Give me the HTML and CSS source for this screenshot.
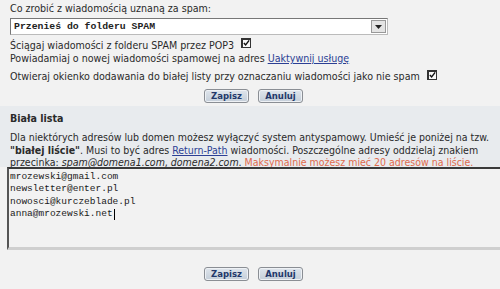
FILE: index.html
```html
<!DOCTYPE html>
<html lang="pl">
<head>
<meta charset="utf-8">
<link rel="stylesheet" href="styles.css">
</head>
<body>
<div class="page">
  <div class="top">
    <div class="label">Co zrobić z wiadomością uznaną za spam:</div>
    <div class="select">
      <span class="select-text">Przenieś do folderu SPAM</span>
      <span class="select-btn"><svg width="7" height="4" viewBox="0 0 7 4"><path d="M0 0h7L3.5 4z" fill="#222"/></svg></span>
    </div>
    <div class="row r1">Ściągaj wiadomości z folderu SPAM przez POP3 <span class="cb"><svg width="8" height="8" viewBox="0 0 8 8"><path d="M1 4l2 2.3L7 1" stroke="#111" stroke-width="1.6" fill="none"/></svg></span></div>
    <div class="row r2">Powiadamiaj o nowej wiadomości spamowej na adres <a class="link">Uaktywnij usługę</a></div>
    <div class="row r3">Otwieraj okienko dodawania do białej listy przy oznaczaniu wiadomości jako nie spam <span class="cb"><svg width="8" height="8" viewBox="0 0 8 8"><path d="M1 4l2 2.3L7 1" stroke="#111" stroke-width="1.6" fill="none"/></svg></span></div>
    <div class="buttons b1"><span class="btn">Zapisz</span><span class="btn">Anuluj</span></div>
  </div>
  <div class="band">
    <div class="title">Biała lista</div>
    <div class="desc">Dla niektórych adresów lub domen możesz wyłączyć system antyspamowy. Umieść je poniżej na tzw.<br><b>"białej liście"</b>. Musi to być adres <a class="link">Return-Path</a> wiadomości. Poszczególne adresy oddzielaj znakiem<br>przecinka: <i>spam@domena1.com</i>, <i>domena2.com</i>. <span class="red">Maksymalnie możesz mieć 20 adresów na liście.</span></div>
  </div>
  <div class="area">
    <div class="ln">mrozewski@gmail.com</div>
    <div class="ln">newsletter@enter.pl</div>
    <div class="ln">nowosci@kurczeblade.pl</div>
    <div class="ln">anna@mrozewski.net<span class="caret"></span></div>
  </div>
  <div class="buttons b2"><span class="btn">Zapisz</span><span class="btn">Anuluj</span></div>
</div>
</body>
</html>
```
FILE: styles.css
```css
* { box-sizing: border-box; }
html, body { margin: 0; padding: 0; }
body {
  width: 500px;
  height: 289px;
  overflow: hidden;
  background: #f2f2f2;
  font-family: "DejaVu Sans Condensed", "DejaVu Sans", sans-serif;
  font-size: 10.6px;
  color: #2a2a2a;
}
.page { display: flex; flex-direction: column; }
.top { padding: 1px 0 0 10px; }
.label { height: 15px; line-height: 14px; }
.select {
  width: 378px;
  height: 17px;
  margin-top: 2px;
  background: #fff;
  border: 1px solid #777;
  border-right-color: #bbb;
  border-bottom-color: #bbb;
  display: flex;
  align-items: center;
  justify-content: space-between;
  padding: 0 1px 0 3px;
}
.select-text {
  font-family: "Liberation Mono", monospace;
  font-size: 9.8px;
  font-weight: bold;
  color: #222;
}
.select-btn {
  width: 15px;
  height: 13px;
  background: #e4e4e4;
  border: 1px solid #999;
  display: flex;
  align-items: center;
  justify-content: center;
}
.row { line-height: 13px; display: flex; align-items: center; }
.r1 { margin-top: 4px; }
.r2 { margin-top: 0; }
.r3 { margin-top: 5px; }
.cb {
  display: inline-flex;
  width: 10px;
  height: 10px;
  border: 1px solid #333;
  border-top-width: 2px;
  border-left-width: 2px;
  background: #fafafa;
  margin-left: 7px;
  margin-top: -6px;
  align-items: center;
  justify-content: center;
}
.r3 .cb { margin-left: 7px; margin-top: -4px; }
.link { color: #2c3f94; text-decoration: underline; margin-left: 3px; }
.desc .link { margin-left: 0; }
.buttons { display: flex; justify-content: center; gap: 9px; padding-left: 7px; }
.b1 { margin-top: 6px; margin-left: -10px; }
.btn {
  width: 45px;
  height: 14px;
  border: 1px solid #8a8e94;
  border-radius: 3px;
  background: linear-gradient(#dfe5ec, #c4ced9);
  color: #23386a;
  font-family: "DejaVu Sans", sans-serif;
  font-size: 8.5px;
  font-weight: bold;
  display: flex;
  align-items: center;
  justify-content: center;
  box-shadow: inset 0 0 0 1px #eef1f5;
}
.band {
  margin-top: 3px;
  background: #e8ebee;
  padding: 6px 0 2px 10px;
  height: 61px;
}
.title { font-weight: bold; line-height: 13px; }
.desc { margin-top: 6px; line-height: 12.5px; font-size: 10.5px; white-space: nowrap; }
.red { color: #e06a4c; }
.area {
  margin-left: 7px;
  height: 83px;
  border-top: 2px solid #3a3a3a;
  border-left: 2px solid #555;
  border-bottom: 3px solid #cfcfcf;
  background: #f2f2f2;
  padding: 2px 0 0 1px;
  font-family: "Liberation Mono", monospace;
  font-size: 9.5px;
  color: #1a1a1a;
}
.ln { line-height: 12.3px; height: 12.3px; display: flex; align-items: center; }
.caret { display: inline-block; width: 1px; height: 11px; background: #000; margin-left: 1px; }
.b2 { margin-top: 17px; }
```
